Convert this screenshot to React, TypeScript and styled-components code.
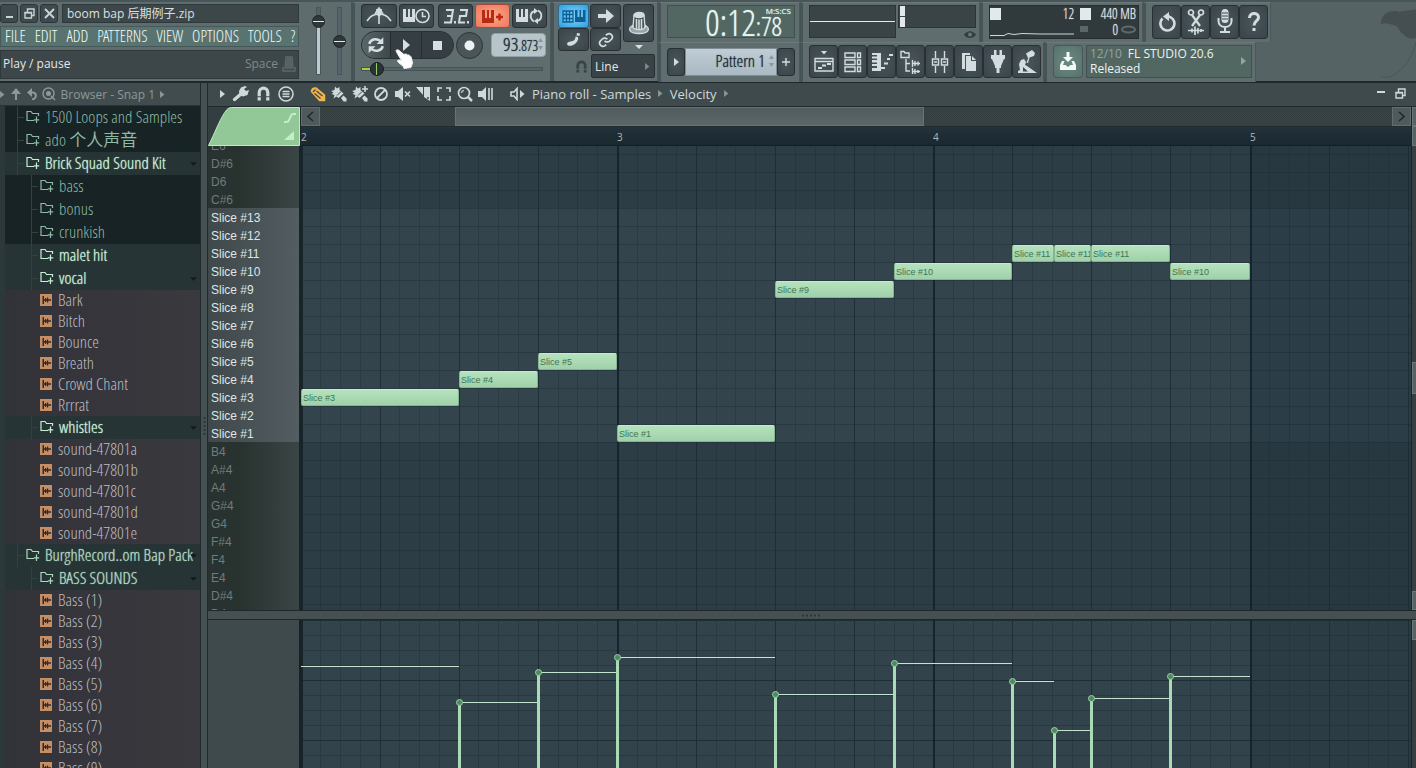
import React from 'react';
import styled, { createGlobalStyle, css } from 'styled-components';

const sans = '"Open Sans", "Noto Sans", "Noto Sans CJK SC", sans-serif';
const narrow = '"Open Sans Condensed Light", "Noto Sans CJK SC", sans-serif';
const arial = '"Liberation Sans", Arial, sans-serif';

const Global = createGlobalStyle`
  * { box-sizing: border-box; }
  body { margin: 0; background: #3f4a4c; font-family: ${sans}; color: #d8e1e1; overflow: hidden; }
  button, select, input { font: inherit; color: inherit; margin: 0; }
  button { padding: 0; border: 0; background: none; cursor: pointer; }
  ul { list-style: none; margin: 0; padding: 0; }
  svg { display: block; flex: none; }
`;

/* ---------- shell ---------- */
const Shell = styled.div`display: flex; flex-direction: column; height: 100vh; min-height: 400px;`;
const Toolbar = styled.header`
  display: flex; flex: none; height: 83px; background: #566365;
  border-top: 2px solid #48565a; border-bottom: 2px solid #1f292d;
`;
const Body = styled.div`display: flex; flex: 1; min-height: 0;`;

/* ---------- toolbar: left ---------- */
const TitlePanel = styled.section`
  width: 300px; flex: none; display: flex; flex-direction: column; gap: 3px; padding: 2px 1px 2px 0;
  background: #5f6c6e;
`;
const TitleRow = styled.div`display: flex; gap: 2px; height: 19px;`;
const WinButton = styled.button`
  width: 18px; display: grid; place-items: center; border-radius: 3px; color: #c9d3d4;
  background: #3f4a4e; border: 1px solid #2c3539;
`;
const TitleBox = styled.h1`
  flex: 1; margin: 0 0 0 2px; padding-left: 4px; font-size: 12px; line-height: 17px; font-weight: 400;
  background: #3d4649; border: 1px solid #2f383b; white-space: nowrap;
`;
const Menu = styled.nav`
  display: flex; gap: 9px; height: 21px; padding: 0 4px; align-items: center; white-space: nowrap;
  background: #587370; border: 1px solid #46595a; font: 16px/19px ${narrow}; color: #f2fbf8;
  text-shadow: 0 0 1px #e6f4f0;
`;
const MenuItem = styled.button``;
const Hint = styled.div`
  display: flex; align-items: center; flex: none; height: 29px; padding: 0 2px 2px; font-size: 12px;
  background: #3d4649; border: 1px solid #2f383b; color: #e1e8e8;
`;
const HintKey = styled.span`margin-left: auto; padding-right: 4px; color: #7e8a8c;`;

const Mixers = styled.section`
  display: flex; width: 52px; flex: none; background: #5f6c6e; padding: 5px 6px 4px 9px; gap: 3px;
  border-right: 1px solid #46535a;
`;
const VRange = styled.input<{ $fill: string }>`
  appearance: none; writing-mode: vertical-lr; direction: rtl; width: 18px; height: 68px; background: none;
  &::-webkit-slider-runnable-track { width: 5px; height: 100%; background: ${p => p.$fill}; border: 1px solid #49555a; }
  &::-webkit-slider-thumb {
    appearance: none; width: 13px; height: 13px; margin-left: -5px; border-radius: 7px;
    background: linear-gradient(#2f373a 5px, #dfe8e9 5px, #dfe8e9 6px, #2f373a 6px); border: 1px solid #1c2225;
  }
`;

/* ---------- toolbar: shared ---------- */
const Panel = styled.section<{ $w?: number; $pad?: string }>`
  ${p => p.$w ? `width: ${p.$w}px;` : ''} flex: none; background: #5f6d6e; padding: ${p => p.$pad ?? '2px 4px 2px 8px'};
  border: 1px solid #4a585b; border-top-color: #6b797a; border-left: 3px solid #465457; border-bottom: 0;
`;
const Line = styled.div<{ $gap?: number; $mt?: number; $h?: number }>`
  display: flex; align-items: center; gap: ${p => p.$gap ?? 0}px; margin-top: ${p => p.$mt ?? 0}px;
  ${p => p.$h ? `height: ${p.$h}px;` : ''}
`;
const tones = {
  dark: css`background: radial-gradient(#4a565b, #3a444a); color: #d3dddf; border-color: #283034;`,
  red: css`background: radial-gradient(#ffab90, #ee7558); color: #b92a14; border-color: #a04c3c;`,
  blue: css`background: radial-gradient(#86d4fa, #2f9fdf); color: #0d5f94; border-color: #2a6a91;`,
  green: css`background: radial-gradient(#6c8a80, #56716c); color: #f1faf6; border-color: #45585a;`,
};
const Btn = styled.button<{ $w: number; $h: number; $tone?: keyof typeof tones }>`
  width: ${p => p.$w}px; height: ${p => p.$h}px; flex: none; display: grid; place-items: center;
  border: 1px solid; border-radius: 3px; ${p => tones[p.$tone ?? 'dark']}
`;
const Pill = styled.div`
  display: flex; height: 28px; width: 93px; border-radius: 14px; overflow: hidden; border: 1px solid #283034; background: #353e42;
`;
const PillPart = styled.button<{ $w: number; $lit?: boolean }>`
  width: ${p => p.$w}px; display: grid; place-items: center; color: #d7e0e1;
  background: ${p => p.$lit ? 'linear-gradient(90deg, #59676b, #3d474c)' : '#353e43'};
  & + & { border-left: 1px solid #262d31; }
`;
const Record = styled.button`
  width: 27px; height: 27px; margin-left: 2px; border-radius: 14px; display: grid; place-items: center;
  background: #4a555a; border: 1px solid #2b3337; color: #edf2f2;
`;
const Tempo = styled.label`
  display: flex; align-items: center; justify-content: flex-end; width: 55px; height: 24px; margin-left: 8px; padding: 0 2px 2px 0;
  background: #b7c5cb; border: 1px solid #93a2a8; border-radius: 4px; color: #1d2b33; font: 19px/22px ${narrow};
  text-shadow: 0 0 1px #1d2b33;
`;
const TempoSmall = styled.span`font-size: 14px; padding-top: 4px;`;
const SongPos = styled.input`
  appearance: none; display: block; width: 182px; height: 16px; background: none;
  &::-webkit-slider-runnable-track {
    height: 4px; border: 1px solid #465256; background: linear-gradient(90deg, #a9cf3c 8px, #56646a 8px);
  }
  &::-webkit-slider-thumb {
    appearance: none; width: 14px; height: 14px; margin-top: -6px; border-radius: 7px; border: 1px solid #171c1e;
    background: linear-gradient(90deg, #2b3336 5px, #8fd26a 5px, #8fd26a 6px, #2b3336 6px);
  }
`;
const Tall = styled.div`display: flex; flex-direction: column; align-items: center; gap: 3px;`;
const Columns = styled.div`display: flex; gap: 2px;`;
const Snap = styled.select`
  appearance: none; width: 64px; height: 24px; padding: 0 6px 0 3px; font-size: 12px; border: 1px solid #283034;
  color: #e0e7e8; background: #394247; border-radius: 2px;
`;
const SnapBox = styled.label`display: flex; align-items: center; gap: 3px; margin: 3px 0 0 17px; color: #3a4447;`;
const SnapArrow = styled.span`margin-left: -13px; color: #7d898c;`;

const Right = styled.div`flex: 1; min-width: 0; display: flex; flex-direction: column;`;
const RightRow = styled.div`
  display: flex; flex: 1; & > section { padding: 1px 3px 3px 6px; display: flex; align-items: center; }
`;
const Clock = styled.output`
  width: 128px; height: 33px; padding: 0 12px 0 0; position: relative; text-align: right;
  background: #526662; border: 1px solid #424f50; color: #e4f5f1; font: 36px/33px ${narrow};
  text-shadow: 0 0 1px #cfe5e0;
`;
const ClockSmall = styled.span`font-size: 26px; line-height: 20px;`;
const ClockUnit = styled.small`position: absolute; top: 1px; right: 3px; font: 8px/8px ${sans};`;
const PatternBox = styled.button`
  width: 92px; height: 28px; display: flex; align-items: center; justify-content: flex-end; gap: 4px; padding: 0 2px 2px 0;
  background: linear-gradient(#c0cdd5, #a9b8c2); color: #202c36; font: 17px/26px ${narrow}; border: 1px solid #7f8e95;
  text-shadow: 0 0 1px #202c36;
`;
const Screen = styled.div<{ $w: number; $h: number }>`
  width: ${p => p.$w}px; height: ${p => p.$h}px; background: #3a4346; border: 1px solid #2c3437;
`;
const PeakColumn = styled.div`display: flex; flex-direction: column; align-items: flex-end; gap: 2px; width: 78px; height: 33px; margin-left: 2px; color: #343e41;`;
const Stats = styled.dl`
  width: 152px; height: 34px; margin: 0; display: grid; grid-template-columns: 90px 1fr; background: #30393c; border: 1px solid #262e31;
  font: 14px/16px ${narrow}; color: #e5eced; text-shadow: 0 0 1px #c5cdcd;
`;
const StatCell = styled.dd`
  display: flex; align-items: center; justify-content: space-between; margin: 0; padding: 0 2px 0 0; height: 16px;
  &:nth-child(odd) { padding-right: 6px; }
`;
const Chip = styled.i`width: 11px; height: 12px; background: #e3e9ea;`;
const StatTail = styled.span`display: flex; align-items: center; gap: 3px;`;
const News = styled.a`
  width: 167px; height: 33px; margin-left: 3px; padding: 0 5px 2px 3px; display: flex; align-items: center; justify-content: space-between;
  text-decoration: none; font: 12px/15px ${sans}; color: #eaf4f1; background: #526662; border: 1px solid #42504f;
`;
const NewsDate = styled.span`color: #93a5a3; margin-right: 6px;`;
const NewsArrow = styled.span`color: #93a5a3;`;
const Tools = styled.div`display: flex;`;
const Logo = styled.div`margin-left: auto; width: 40px; overflow: hidden;`;

/* ---------- browser ---------- */
const Browser = styled.aside`width: 201px; flex: none; display: flex; flex-direction: column; overflow: hidden; border-right: 1px solid #212a2d;`;
const BrowserHead = styled.div`
  display: flex; align-items: center; gap: 5px; flex: none; height: 23px; font-size: 12px; color: #8c989a; background: #414c4e;
  border-bottom: 1px solid #2a3336;
`;
const Tree = styled.ul`flex: 1; overflow: hidden; padding-left: 5px; background: #2d3839;`;
const rowTone = {
  shut: css`background: #172324; color: #8fbaa6;`,
  open: css`background: #273435; color: #aed8c1; text-shadow: 0 0 1px currentColor;`,
  file: css`background: linear-gradient(90deg, #323239, #3a393e); color: #bcbdc3;`,
};
const TreeRow = styled.button<{ $tone: keyof typeof rowTone; $depth: number; $bright?: boolean }>`
  display: flex; align-items: center; width: 100%; height: ${p => p.$tone === 'file' ? 21 : 23}px; gap: 5px; position: relative;
  padding: 0 0 2px ${p => p.$depth * 14 + 21}px; font: 17px/20px ${narrow}; white-space: nowrap; text-align: left;
  ${p => rowTone[p.$tone]} ${p => p.$bright && css`color: #c6f1d7;`}
  &::before {
    content: ''; display: ${p => p.$tone === 'file' ? 'none' : 'block'}; position: absolute; top: 0; bottom: 0;
    left: ${p => p.$depth * 14 + 12}px; width: 6px; border-left: 1px solid #33413f;
    background: linear-gradient(#33413f, #33413f) 0 50% / 6px 1px no-repeat;
  }
`;
const RowArrow = styled.span`position: absolute; right: 3px; top: 10px; color: #121b1c;`;
const Gutter = styled.div`
  width: 7px; flex: none; display: grid; place-items: center; background: #465153; border-right: 1px solid #212a2d; color: #2c3537;
`;

/* ---------- piano roll ---------- */
const Roll = styled.main`flex: 1; min-width: 0; display: flex; flex-direction: column;`;
const RollHead = styled.div`
  display: flex; align-items: center; flex: none; height: 24px; padding: 0 0 2px 12px; background: #3f4a4c; color: #cfd9da;
  border-bottom: 1px solid #20292c; font-size: 13px;
`;
const IconRow = styled.div<{ $gap: number; $lead?: number }>`
  display: flex; align-items: center; gap: ${p => p.$gap}px; padding-left: ${p => p.$lead ?? 0}px;
`;
const Crumbs = styled.div`display: flex; align-items: center; gap: 7px; margin-left: 16px; white-space: nowrap;`;
const CrumbArrow = styled.span`color: #8a9698;`;
const HeadWin = styled.div`display: flex; align-items: center; gap: 10px; margin-left: auto; padding-right: 10px;`;
const Nav = styled.div`display: flex; flex: none; height: 39px;`;
const NavMain = styled.div`flex: 1; min-width: 0; border-left: 1px solid #1c2528;`;
const HScroll = styled.div`display: flex; height: 20px; border-bottom: 1px solid #222c2f; background: #343e40;`;
const ScrollBtn = styled.button`width: 19px; flex: none; display: grid; place-items: center; background: #4e5a5c; border: 1px solid #616d6f; color: #20292b;`;
const HTrack = styled.div`
  flex: 1; display: grid; grid-template-columns: 135fr 469fr 468fr;
  background: conic-gradient(#333d3f 25%, #3b4547 0 50%, #333d3f 0 75%, #3b4547 0) 0 0 / 2px 2px;
`;
const HThumb = styled.button`grid-column: 2; background: linear-gradient(#505c5e, #5a6668); border: 1px solid #667274;`;
const Ruler = styled.div`
  position: relative; height: 19px; overflow: hidden; background: linear-gradient(#22313a, #1a2930); border-bottom: 1px solid #13201f;
  font: 10px/21px ${sans}; color: #aeb9bc;
`;
const BarNo = styled.span`position: absolute; top: 0;`;
const SideCol = styled.div`width: 5px; flex: none; display: flex; flex-direction: column; background: #363f41; border-left: 1px solid #1b2528;`;
const SideBtn = styled.button<{ $h: number; $top?: string }>`height: ${p => p.$h}px; margin-top: ${p => p.$top ?? '0'}; background: #566264; border: 1px solid #6c787a; border-right: 0;`;
const Lane = styled.div<{ $grow: number }>`display: flex; flex: ${p => p.$grow} 1 0; min-height: 0; overflow: hidden;`;
const Keys = styled.ul`width: 93px; flex: none; overflow: hidden; background: #2a3535; border-right: 2px solid #1a2326;`;
const Key = styled.li<{ $slice: boolean }>`
  height: 18px; padding: 1px 0 0 3px; font: 12px/18px ${arial};
  color: ${p => p.$slice ? '#dfe6e7' : '#6f7c7c'};
  background: ${p => p.$slice ? 'linear-gradient(90deg, #3f484a, #535d62)' : 'linear-gradient(90deg, #283232, #28322f 35%, #3a4545)'};
  &:first-child { margin-top: -10px; }
`;
const Canvas = styled.div`position: relative; flex: 1; min-width: 0; overflow: hidden; background: #2d3d46;`;
const Note = styled.div`
  position: absolute; height: 17px; padding-left: 1px; overflow: hidden; white-space: nowrap; font: 9px/16px ${arial};
  color: #3f7552; background: linear-gradient(#b5e2bd, #a0d1aa); border: 1px solid #86b690; border-top-color: #c6ecca;
  border-radius: 2px;
`;
const Split = styled.div`
  display: flex; justify-content: center; align-items: center; height: 10px; flex: none; background: #465052; color: #2c3638;
  border-top: 1px solid #1e282b; border-bottom: 1px solid #1e282b;
`;
const Controls = styled.div`width: 93px; flex: none; background: #3f4a4c; border-right: 2px solid #182124;`;
const Pointer = styled.div`position: absolute; left: 395px; top: 49px; z-index: 5;`;

/* ---------- icons ---------- */
type IconProps = { w?: number; h?: number; box?: string; sw?: number; children: React.ReactNode };
const Icon = ({ w = 20, h, box, sw = 2, children }: IconProps) => (
  <svg width={w} height={h ?? w} viewBox={box ?? `0 0 ${w} ${h ?? w}`} fill="none" stroke="currentColor" strokeWidth={sw} aria-hidden="true">
    {children}
  </svg>
);
const F = { fill: 'currentColor', stroke: 'none' } as const;
const TriR = ({ s = 8 }: { s?: number }) => <svg width={s / 2 + 1} height={s} viewBox="0 0 5 8" aria-hidden="true"><path d="M0 0 5 4 0 8z" fill="currentColor" /></svg>;
const TriD = ({ s = 7 }: { s?: number }) => <svg width={s} height={4} viewBox="0 0 8 4" aria-hidden="true"><path d="M0 0H8L4 4z" fill="currentColor" /></svg>;
const Spin = () => <svg width="5" height="12" viewBox="0 0 5 12" aria-hidden="true"><path d="M0 4 2.500 0 5 4zM0 8 2.500 12 5 8z" fill="#8897a0" /></svg>;
const FolderIcon = () => (
  <Icon w={14} h={13} sw={1.2}><path d="M8 10.500H1V1.500H5L6.500 3.500H12.500V6" /><path d="M10.500 6.500V13M7.800 9.800H13.200" /></Icon>
);
const FileIcon = () => (
  <Icon w={13} h={12}>
    <path d="M0 0H12V12H0z" fill="#c58e64" stroke="none" />
    <path d="M2.500 2H4V5.200H5V4H6.200V5.200H7V3.500H8.200V5.200H11V6.800H8.200V8.500H7V6.800H6.200V8H5V6.800H4V10H2.500z" fill="#33272a" stroke="none" />
  </Icon>
);
const Piano = () => <path d="M0 1H3V9H5V1H7V9H9V1H12V14H0z" {...F} />;
const Sync = ({ w = 17 }: { w?: number }) => (
  <Icon w={w} h={w} box="0 0 16 16" sw={2.2}><path d="M2 7C3 3 8 1.500 12 4.500M14 9C13 13 8 14.500 4 11.500" /><path d="M14.500 1V7H8.500zM1.500 15V9H7.500z" {...F} /></Icon>
);
const MagnetIcon = ({ w = 13 }: { w?: number }) => (
  <Icon w={w} h={w} box="0 0 13 14" sw={3}><path d="M2.500 9.500V6a4 4 0 0 1 8 0V9.500" /><path d="M1 10.500H4V13.500H1zM9 10.500H12V13.500H9z" {...F} /></Icon>
);
const Restore = ({ w = 11 }: { w?: number }) => (
  <Icon w={w} box="0 0 11 11" sw={1.4}><path d="M1 4.500H7.500V10H1zM3.500 4V1H10V7.500H8" /><path d="M.5 4H8V5.500H.5z" {...F} /></Icon>
);
const Knob = () => (
  <Icon w={22} h={24} sw={1.3}>
    <ellipse cx="11" cy="4" rx="5" ry="2.500" fill="currentColor" />
    <path d="M6 4 5 16M16 4 17 16" /><path d="M8.500 8V18M11 8.500V18.500M13.500 8V18" strokeWidth="1.600" />
    <path d="M4.500 14.500C0 17 0 22.500 11 22.500S22 17 17.500 14.500C17 20 5 20 4.500 14.500z" fill="currentColor" fillOpacity=".6" />
  </Icon>
);

const toolIcons: [string, React.ReactNode][] = [
  ['Playlist', <Icon w={20} h={24} sw={1.4}><path d="M1 8.500H19V21H1zM1 11.500H19" /><path d="M7 1H13L10 4.500zM4 17H8V19H4zM8 14.500H12V16.500H8zM13 13H17V15H13z" {...F} /></Icon>],
  ['Channel rack', <Icon w={18} h={22} sw={1.4}><path d="M1 2H11V6.500H1zM1 9H11V13.500H1zM1 16H11V20.500H1zM13.500 2H16.500V6.500H13.500zM13.500 9H16.500V13.500H13.500zM13.500 16H16.500V20.500H13.500z" /></Icon>],
  ['Piano roll', <Icon w={22} h={20}><path d="M1 1H10V19H1V16H6V14H1V12H6V10.500H1V8H6V6.500H1V4.500H6V3H1z" {...F} /><path d="M10 16H14M13 11.500H17M16 7H19M18 3H22" /></Icon>],
  ['Browser', <Icon w={22} h={24} sw={1.4}><path d="M1 1.500H4L5 3H9V7.500H1zM6 9V21H10M6 13.500H10" /><path d="M12.500 10V17M12 13.500H20M15 11V16M18 11.500V15.500M12.500 18V24M12 21.500H20M15 19V24M18 20V23" /></Icon>],
  ['Mixer', <Icon w={18} h={24} sw={1.4}><path d="M4.500 1V8M4.500 16V23M13.500 1V8M13.500 16V23M1.500 9H7.500V15H1.500zM10.500 9H16.500V15H10.500zM3 12H6M12 12H15" /></Icon>],
  ['Project files', <Icon w={16} h={20}><path d="M1 1H9V3H4V17H1zM5 4H10V9H15V19H5zM11 4 15 8H11z" {...F} /></Icon>],
  ['Plugins', <Icon w={16} h={24}><path d="M4 0H6.500V5H4zM9.500 0H12V5H9.500zM1 5H15V9H14L11 16V18H9.500V23H6.500V18H5V16L2 9H1z" {...F} /></Icon>],
  ['Tempo tapper', <Icon w={20} h={24}><path d="M9 3.500 15 0 18 3 17 6 11 8zM13 6 11 13 9.500 12.500 12 6zM4 10 7 9 9 12 8 15 10 16 20 23H1V21L3 20 2 14z" {...F} /><path d="M6 17 11 21.500H6z" fill="#3f494e" stroke="none" /></Icon>],
];

const BrushBody = (
  <>
    <path d="M0 5 3.500 4 4 .5 6 2.500 8.500 1 8.500 4 12.500 7.500 7.500 12 5.500 10.500 2.500 12.500 3.500 9 .5 8 2.500 6.500z" {...F} />
    <path d="M10 12 12.500 9.500 15.500 12.500V15.500H12.500z" {...F} />
    <path d="M10 5.500 6 9.500" stroke="#3f4a4c" strokeWidth="1" />
  </>
);

/* ---------- data ---------- */
type RowData = [name: string, tone: 'shut' | 'open' | 'file', depth: number, arrow?: boolean, bright?: boolean];
const files = (names: string[], depth = 1): RowData[] => names.map(n => [n, 'file', depth]);
const rows: RowData[] = [
  ['1500 Loops and Samples', 'shut', 0],
  ['ado 个人声音', 'shut', 0],
  ['Brick Squad Sound Kit', 'open', 0, true, true],
  ['bass', 'shut', 1], ['bonus', 'shut', 1], ['crunkish', 'shut', 1],
  ['malet hit', 'open', 1, false, true],
  ['vocal', 'open', 1, true, true],
  ...files(['Bark', 'Bitch', 'Bounce', 'Breath', 'Crowd Chant', 'Rrrrat']),
  ['whistles', 'open', 1, true, true],
  ...files(['a', 'b', 'c', 'd', 'e'].map(c => `sound-47801${c}`)),
  ['BurghRecord..om Bap Pack', 'open', 0, true],
  ['BASS SOUNDS', 'open', 1, true],
  ...files([1, 2, 3, 4, 5, 6, 7, 8, 9].map(n => `Bass (${n})`)),
];

const keyNames = [
  'E6', 'D#6', 'D6', 'C#6',
  ...Array.from({ length: 13 }, (_, i) => `Slice #${13 - i}`),
  'B4', 'A#4', 'A4', 'G#4', 'G4', 'F#4', 'F4', 'E4', 'D#4', 'D4',
];

const BAR = 949 / 3;
const at = (step: number) => Math.floor((step * BAR) / 16);
const rowTop = (slice: number) => 62 + (13 - slice) * 18;

const notes = [
  { slice: 3, from: 0, to: 8, vel: 46 },
  { slice: 4, from: 8, to: 12, vel: 82 },
  { slice: 5, from: 12, to: 16, vel: 52 },
  { slice: 1, from: 16, to: 24, vel: 37 },
  { slice: 9, from: 24, to: 30, vel: 74 },
  { slice: 10, from: 30, to: 36, vel: 43 },
  { slice: 11, from: 36, to: 38.1, vel: 61 },
  { slice: 11, from: 38.1, to: 40, vel: 110 },
  { slice: 11, from: 40, to: 44, vel: 78 },
  { slice: 10, from: 44, to: 48, vel: 56 },
];

const Grid = ({ shade, first, step, strong }: { shade?: boolean; first: number; step: number; strong?: number }) => (
  <svg width="100%" height="100%" aria-hidden="true" shapeRendering="crispEdges">
    <rect width="100%" height="100%" fill={shade ? '#2d3d46' : '#33434c'} />
    {shade && <rect y="62" width="100%" height="234" fill="#34444d" />}
    <rect x={at(48)} width="100%" height="100%" fill="#1e3038" opacity="0.35" />
    {Array.from({ length: 40 }, (_, i) => (
      <rect key={i} y={first + i * step} width="100%" height="1" fill="#1c2c33" opacity={strong !== undefined && i % 4 === strong ? 0.9 : 0.45} />
    ))}
    {Array.from({ length: 160 }, (_, i) => (
      <rect key={i} x={at(i)} width={i % 16 === 0 ? 2 : 1} height="100%" fill={i % 16 === 0 ? '#12222a' : '#1b2b32'} opacity={i % 16 === 0 ? 0.9 : i % 4 === 0 ? 0.8 : 0.35} />
    ))}
  </svg>
);

const VelocityChart = () => (
  <svg width="100%" height="100%" aria-hidden="true">
    {notes.map(n => (
      <g key={n.from}>
        <rect x={at(n.from)} y={n.vel} width={at(n.to) - at(n.from)} height="1" fill="#c4e3d0" />
        {n.from > 0 && <rect x={at(n.from) - 1} y={n.vel} width="3" height="100%" fill="#a9dcb4" />}
        {n.from > 0 && <circle cx={at(n.from) + 0.5} cy={n.vel + 0.5} r="3" fill="#4a8a5c" stroke="#9fcfac" />}
      </g>
    ))}
  </svg>
);
const VelLayer = styled.div`position: absolute; inset: 0;`;

export default function App() {
  return (
    <Shell>
      <Global />
      <Toolbar>
        <TitlePanel>
          <TitleRow>
            <WinButton aria-label="Minimize"><Icon w={9} h={11}><path d="M1 9H8" /></Icon></WinButton>
            <WinButton aria-label="Restore"><Restore /></WinButton>
            <WinButton aria-label="Close"><Icon w={11}><path d="M1 1 10 10M10 1 1 10" /></Icon></WinButton>
            <TitleBox>boom bap 后期例子.zip</TitleBox>
          </TitleRow>
          <Menu>
            {['FILE', 'EDIT', 'ADD', 'PATTERNS', 'VIEW', 'OPTIONS', 'TOOLS', '?'].map(m => <MenuItem key={m}>{m}</MenuItem>)}
          </Menu>
          <Hint>Play / pause<HintKey>Space</HintKey>
            <Icon w={14} h={18} sw={1.5}><path d="M4 2H10L11 13H3zM7 3V13M1 12V16H13V12" stroke="#5c686a" /><path d="M4 2H10L11 13H3z" fill="#566264" stroke="none" /></Icon>
          </Hint>
        </TitlePanel>
        <Mixers>
          <VRange type="range" aria-label="Main volume" defaultValue={86} $fill="linear-gradient(#55626a 14px, #bccbd2 14px)" />
          <VRange type="range" aria-label="Main pitch" defaultValue={49} $fill="#56636a" />
        </Mixers>

        <Panel $w={199} $pad="1px 2px 0 6px">
          <Line $gap={2} $h={24}>
            <Btn $w={36} $h={24} aria-label="Metronome"><Icon w={26} h={18} sw={1.6}><path d="M1 14C4 9 8 7 13 7S22 9 25 14M13 1V17M9 7 13 1 17 7" /><path d="M10 2H16L15 8 13 10 11 8z" {...F} /></Icon></Btn>
            <Btn $w={35} $h={24} aria-label="Wait for input"><Icon w={28} h={16} sw={1.6}><Piano /><circle cx="19.500" cy="8" r="6.500" fill="#434e53" /><path d="M19.500 4V8.500H23" /></Icon></Btn>
            <span />
            <Btn $w={35} $h={24} aria-label="Countdown"><Icon w={26} h={15} sw={2}><path d="M3 1H10L9 7H4M9 7 8 13.500H1M17 1H24L23 7H17L16 13.500H22" /><path d="M11 12H13V14.500H11zM24 12H26V14.500H24z" {...F} /></Icon></Btn>
            <Btn $w={35} $h={24} $tone="red" aria-label="Overdub"><Icon w={22} h={15} sw={2.4}><Piano /><path d="M14 8H21M17.500 4.500V11.500" /></Icon></Btn>
            <Btn $w={35} $h={24} aria-label="Loop record"><Icon w={28} h={16} sw={1.8}><Piano /><path d="M18 13.500C13 10 14 4 19 3M22 2.500C27 5 26 12 21 13" /><path d="M18 0 22 3 18 6zM22 10 18 13 22 16z" {...F} /></Icon></Btn>
          </Line>
          <Line $mt={3} $h={28}>
            <Pill>
              <PillPart $w={28} $lit aria-label="Pattern / song"><Sync w={18} /></PillPart>
              <PillPart $w={31} aria-label="Play"><Icon w={8} h={12}><path d="M1 0 8 6 1 12z" {...F} /></Icon></PillPart>
              <PillPart $w={32} aria-label="Stop"><Icon w={9}><path d="M0 0H9V9H0z" {...F} /></Icon></PillPart>
            </Pill>
            <Record aria-label="Record"><Icon w={11}><circle cx="5.500" cy="5.500" r="5" {...F} /></Icon></Record>
            <Tempo>93<TempoSmall>.873</TempoSmall><Spin /></Tempo>
          </Line>
          <Line $mt={2}><SongPos type="range" aria-label="Song position" defaultValue={5} /></Line>
        </Panel>

        <Panel $w={107} $pad="1px 3px 0 4px">
          <Columns>
            <div>
              <Line $gap={1}>
                <Btn $w={31} $h={24} $tone="blue" aria-label="Typing keyboard"><Icon w={24} h={15} sw={1.3}><path d="M1 2H11V13H1zM1 5.500H11M1 9.500H11M4.500 2V13M7.500 2V13" /><path d="M13 1H15.500V8H17.500V1H19V8H21V1H23.500V13H13z" {...F} /></Icon></Btn>
                <Btn $w={31} $h={24} aria-label="Follow playhead"><Icon w={16} h={14}><path d="M0 5H8V0L16 7 8 14V9H0z" {...F} /></Icon></Btn>
              </Line>
              <Line $gap={1}>
                <Btn $w={31} $h={23} aria-label="Note colors"><Icon w={16} h={16}><path d="M1 11.500C2 9.500 5 9.500 7 9 9 8 9.500 6 9.500 4.500L12 5C13 8 10 12 7 13 4 14.500 1 14 1 11.500zM11 1 14 1.500 13.500 4 10.500 3.500z" {...F} /></Icon></Btn>
                <Btn $w={31} $h={23} aria-label="Link"><Icon w={16} h={16} box="0 0 24 24" sw={2.6}><path d="M10 13a5 5 0 0 0 7.500.5l3-3a5 5 0 0 0-7-7l-1.700 1.700" /><path d="M14 11a5 5 0 0 0-7.500-.5l-3 3a5 5 0 0 0 7 7l1.700-1.700" /></Icon></Btn>
              </Line>
            </div>
            <Tall>
              <Btn $w={31} $h={38} aria-label="Knob link"><Knob /></Btn>
              <TriD s={8} />
            </Tall>
          </Columns>
          <SnapBox><MagnetIcon /><Snap aria-label="Snap"><option>Line</option></Snap><SnapArrow><TriR s={7} /></SnapArrow></SnapBox>
        </Panel>

        <Right>
          <RightRow>
            <Panel $w={142}><Clock>0:12<ClockSmall>:78</ClockSmall><ClockUnit>M:S:CS</ClockUnit></Clock></Panel>
            <Panel $w={180}>
              <Screen $w={87} $h={33}><svg width="85" height="31"><rect y="15" width="85" height="1" fill="#e6ecec" /></svg></Screen>
              <PeakColumn>
                <Screen $w={78} $h={23}><svg width="76" height="21"><path d="M1 0H6V10H1zM1 11H6V21H1z" fill="#e3e9ea" /></svg></Screen>
                <Icon w={12} h={9}><path d="M0 5C3 0 9 0 12 5 9 9 3 9 0 5z" {...F} /><circle cx="6" cy="4.500" r="2" fill="#66767a" stroke="none" /></Icon>
              </PeakColumn>
            </Panel>
            <Panel $w={163}>
              <Stats>
                <StatCell><Chip />12</StatCell>
                <StatCell><Chip />440 MB</StatCell>
                <StatCell><svg width="84" height="15"><path d="M0 13.500H14L18 11.500 24 12.500 32 11.500 50 12H84" stroke="#cfd8d8" fill="none" /></svg></StatCell>
                <StatCell><Icon w={9} h={8}><path d="M0 0H8V6H0z" fill="#5b6669" stroke="none" /></Icon><StatTail>0<Icon w={15} h={9}><ellipse cx="7.500" cy="4.500" rx="6.500" ry="3" stroke="#5e696c" /></Icon></StatTail></StatCell>
              </Stats>
            </Panel>
            <Panel $w={128}>
              <Tools>
                <Btn $w={29} $h={34} aria-label="Undo"><Icon w={18} h={20} sw={2.6}><path d="M4.500 6.500A7 7 0 1 0 9 4.500H12" /><path d="M11 0V9L5 4.500z" {...F} /></Icon></Btn>
                <Btn $w={29} $h={34} aria-label="Cut tool"><Icon w={18} h={26} sw={1.7}><circle cx="4" cy="3.500" r="2.500" /><circle cx="14" cy="3.500" r="2.500" /><path d="M5 6 13 17M13 6 5 17" strokeWidth="2.200" /><path d="M1 21.500H17M5 19.500V23.500M8 17.500V26M11 19V24.500M14 20V23" /></Icon></Btn>
                <Btn $w={29} $h={34} aria-label="Record audio"><Icon w={16} h={25}><rect x="4.500" y="0" width="7" height="14" rx="3.500" {...F} /><path d="M1.500 9V12C1.500 20 14.500 20 14.500 12V9M8 18V22" /><path d="M3 22H13V24H3z" {...F} /><path d="M5 4H11M5 7H11M5 10H11" stroke="#3f4a4e" strokeWidth="1" /></Icon></Btn>
                <Btn $w={29} $h={34} aria-label="Help"><Icon w={12} h={20} sw={3}><path d="M1.500 6C1.500 0 10.500 0 10.500 5.500 10.500 9 6 9 6 13.500M6 16V19" /></Icon></Btn>
              </Tools>
            </Panel>
            <Logo><svg width="50" height="40"><path d="M5 20C6 12 14 7 24 10 32 7 38 10 50 4V30C44 36 34 40 27 32 23 30 23 25 20 24 14 22 10 20 5 22z" fill="#454f52" /></svg></Logo>
          </RightRow>
          <RightRow>
            <Panel $w={142}>
              <Btn $w={18} $h={28} aria-label="Previous pattern"><TriR s={8} /></Btn>
              <PatternBox>Pattern 1<Spin /></PatternBox>
              <Btn $w={18} $h={28} aria-label="Add pattern"><Icon w={8} sw={1.4}><path d="M4 0V8M0 4H8" /></Icon></Btn>
            </Panel>
            <Panel $w={244}>
              <Tools>{toolIcons.map(([label, icon]) => <Btn key={label} $w={29} $h={33} aria-label={label}>{icon}</Btn>)}</Tools>
            </Panel>
            <Panel $w={212}>
              <Btn $w={30} $h={33} $tone="green" aria-label="Download"><Icon w={18} h={19}><path d="M7.500 0H10.500V5H14L9 10 4 5H7.500zM3 9 1 13V18H17V13L15 9H12.500L14 13H11.500L9 15 6.500 13H4L5.500 9z" {...F} /></Icon></Btn>
              <News href="#news"><span><NewsDate>12/10</NewsDate>FL STUDIO 20.6<br />Released</span><NewsArrow><TriR s={8} /></NewsArrow></News>
            </Panel>
            <Logo><svg width="50" height="40"><path d="M5 34C16 40 34 24 40 0" stroke="#4a5558" fill="none" /></svg></Logo>
          </RightRow>
        </Right>
      </Toolbar>

      <Body>
        <Browser>
          <BrowserHead>
            <TriR s={7} />
            <Icon w={12} h={12}><path d="M6 12V3" /><path d="M1 6 6 0 11 6z" {...F} /></Icon>
            <Icon w={10} h={12}><path d="M3 4.500H6C10 5 10 11 5 11.500" /><path d="M5 0V9L0 4.500z" {...F} /></Icon>
            <Icon w={14} h={14} sw={1.4}><circle cx="6.500" cy="6.500" r="5.500" /><circle cx="6.500" cy="6.500" r="2.500" {...F} /><path d="M9 9 13 13" /></Icon>
            Browser - Snap 1 <TriR s={7} />
          </BrowserHead>
          <Tree>
            {rows.map(([name, tone, depth, arrow, bright]) => (
              <li key={name}>
                <TreeRow $tone={tone} $depth={depth} $bright={bright}>
                  {tone === 'file' ? <FileIcon /> : <FolderIcon />}{name}
                  {arrow && <RowArrow><TriD /></RowArrow>}
                </TreeRow>
              </li>
            ))}
          </Tree>
        </Browser>
        <Gutter><svg width="3" height="18"><path d="M1.500 0V18" stroke="currentColor" strokeWidth="2" strokeDasharray="2 2" /></svg></Gutter>

        <Roll>
          <RollHead>
            <IconRow $gap={7}>
              <TriR s={8} />
              <Icon w={17} h={16} sw={3.4}><path d="M2.500 13.500 9 8" strokeLinecap="round" /><path d="M7 5 9 1.500 13 0 15 1 12 3 14 5 17 4 15.500 9 11 10.500 7.500 9z" {...F} /></Icon>
              <MagnetIcon w={15} />
              <Icon w={16} sw={1.5}><circle cx="8" cy="8" r="7" /><path d="M4.500 5.500H11.500M4.500 8H11.500M4.500 10.500H11.500" /></Icon>
            </IconRow>
            <IconRow $gap={5} $lead={16}>
              <Icon w={16} sw={1.5}><path d="M1.500 5.500C1.500 3 3.500 1.500 6 2L14.500 9V14.500H9.500z" stroke="#eeb54e" fill="#eeb54e" /><path d="M3 6 5.500 3.500M4.500 7.500 10.500 12.500M6.500 5 12.500 10" stroke="#4f4a35" strokeWidth="1.300" /></Icon>
              <Icon w={16}>{BrushBody}</Icon>
              <Icon w={16}>{BrushBody}<path d="M13 0V6M10 3H16" strokeWidth="1.600" /></Icon>
              <Icon w={16} sw={1.8}><circle cx="8" cy="8" r="6" /><path d="M4 12 12 4" /></Icon>
              <Icon w={17} h={16} sw={1.7}><path d="M1 5H4L9 1V15L4 11H1z" {...F} /><path d="M11 5.500 16 10.500M16 5.500 11 10.500" /></Icon>
              <Icon w={15} h={16}><path d="M0 1H7V9zM8 1H14V15L8 11z" {...F} /><path d="M12 11V13" stroke="#3f4a4c" strokeWidth="1.500" /></Icon>
              <Icon w={16} sw={1.7}><path d="M2 6V2H6M10 2H14V6M14 10V14H10M6 14H2V10" /></Icon>
              <Icon w={16} sw={1.7}><circle cx="7" cy="7" r="5.500" /><path d="M4.500 7A2.500 2.500 0 0 1 7 4.500" stroke="#a8b4b6" /><path d="M11 11 15 15" strokeWidth="2.500" /></Icon>
              <Icon w={16} sw={1.6}><path d="M0 5H4L8 1V15L4 11H0z" {...F} /><path d="M11 2V14M14 2V14" /></Icon>
            </IconRow>
            <Crumbs>
              <Icon w={15} h={14} sw={1.6}><path d="M1 5H4L7 1.500V12.500L4 9H1z" /><path d="M10 3 14.500 7 10 11z" {...F} /></Icon>
              <span>Piano roll - Samples</span><CrumbArrow><TriR s={7} /></CrumbArrow><span>Velocity</span><CrumbArrow><TriR s={7} /></CrumbArrow>
            </Crumbs>
            <HeadWin><Icon w={8} h={11}><path d="M0 4H8" /></Icon><Restore /></HeadWin>
          </RollHead>

          <Nav>
            <svg width="92" height="39" aria-hidden="true">
              <rect width="92" height="39" fill="#333e40" />
              <path d="M.5 38.500C6 28 13 9 19 2.500 21 .5 23 .5 25 .5H91.500V38.500z" fill="#92c798" stroke="#bdecc2" />
              <path d="M76 15H79C82 15 82 7 85 7H88" fill="none" stroke="#c3efc8" strokeWidth="2" />
              <path d="M86 24V33H76z" fill="#c3efc8" />
            </svg>
            <NavMain>
              <HScroll>
                <ScrollBtn aria-label="Scroll left"><Icon w={7} h={11} sw={1.6}><path d="M6 1 1 5.500 6 10" /></Icon></ScrollBtn>
                <HTrack><HThumb aria-label="Scroll position" /></HTrack>
                <ScrollBtn aria-label="Scroll right"><Icon w={7} h={11} sw={1.6}><path d="M1 1 6 5.500 1 10" /></Icon></ScrollBtn>
              </HScroll>
              <Ruler>{[2, 3, 4, 5].map((n, i) => <BarNo key={n} style={{ left: at(i * 16) }}>{n}</BarNo>)}</Ruler>
            </NavMain>
            <SideCol><SideBtn $h={19} aria-label="Zoom" /><SideBtn $h={20} aria-label="Scroll up" /></SideCol>
          </Nav>

          <Lane $grow={464}>
            <Keys>{keyNames.map(k => <Key key={k} $slice={k.startsWith('Slice')}>{k}</Key>)}</Keys>
            <Canvas>
              <Grid shade first={8} step={18} />
              {notes.map(n => (
                <Note key={n.from} style={{ left: at(n.from), top: rowTop(n.slice) + 1, width: at(n.to) - at(n.from) }}>Slice #{n.slice}</Note>
              ))}
            </Canvas>
            <SideCol><SideBtn $h={32} $top="216px" aria-label="Vertical scroll" /><SideBtn $h={19} $top="auto" aria-label="Scroll down" /></SideCol>
          </Lane>
          <Split><svg width="20" height="3"><path d="M0 1.500H20" stroke="currentColor" strokeWidth="2" strokeDasharray="2 2" /></svg></Split>
          <Lane $grow={148}>
            <Controls />
            <Canvas>
              <Grid first={0} step={15} strong={0} />
              <VelLayer><VelocityChart /></VelLayer>
            </Canvas>
            <SideCol><SideBtn $h={20} aria-label="Scroll up" /></SideCol>
          </Lane>
        </Roll>
      </Body>
      <Pointer>
        <svg width="19" height="21" viewBox="0 0 19 21" aria-hidden="true">
          <path d="M1 1.500C2 0 4 1 6 3L9 5.500C10 4.500 12 5 12.500 6 14 5.500 16 7 16.500 9L17.500 14 16 18.500 9 19.500 8 17 4 14C2 12.500 2 11 4 11L6.500 11.500 2 4z" fill="#fff" stroke="#e9efef" />
        </svg>
      </Pointer>
    </Shell>
  );
}
